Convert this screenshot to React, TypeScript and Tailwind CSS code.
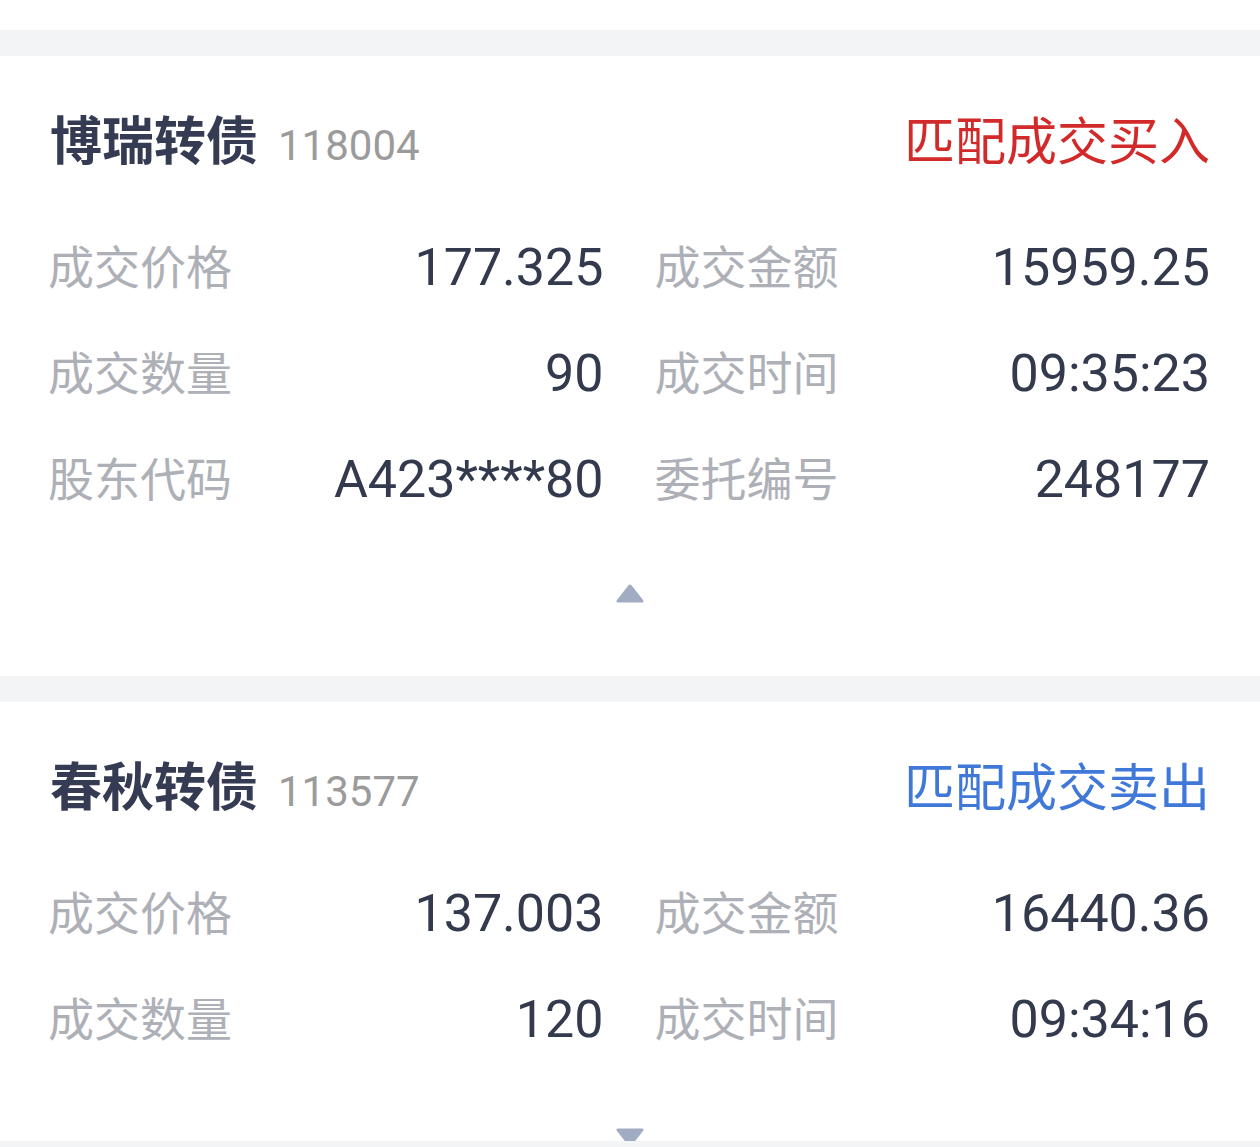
type Field = { label: string; value: string };

type Trade = {
  name: string;
  code: string;
  action: string;
  side: "buy" | "sell";
  left: Field[];
  right: Field[];
  expanded: boolean;
};

const trades: Trade[] = [
  {
    name: "博瑞转债",
    code: "118004",
    action: "匹配成交买入",
    side: "buy",
    left: [
      { label: "成交价格", value: "177.325" },
      { label: "成交数量", value: "90" },
      { label: "股东代码", value: "A423****80" },
    ],
    right: [
      { label: "成交金额", value: "15959.25" },
      { label: "成交时间", value: "09:35:23" },
      { label: "委托编号", value: "248177" },
    ],
    expanded: true,
  },
  {
    name: "春秋转债",
    code: "113577",
    action: "匹配成交卖出",
    side: "sell",
    left: [
      { label: "成交价格", value: "137.003" },
      { label: "成交数量", value: "120" },
    ],
    right: [
      { label: "成交金额", value: "16440.36" },
      { label: "成交时间", value: "09:34:16" },
    ],
    expanded: false,
  },
];

const cjk = "font-['Noto_Sans','Noto_Sans_CJK_SC',sans-serif]";
const num = "font-['Roboto','Noto_Sans_CJK_SC',sans-serif]";

function Cell({ field }: { field: Field }) {
  return (
    <div className="flex h-[106px] items-center justify-between">
      <span className={`${cjk} -mt-[4px] -ml-[2px] text-[46px] leading-none text-[#aeb0b8]`}>{field.label}</span>
      <span className={`${num} text-[52px] leading-none text-[#343a4d]`}>{field.value}</span>
    </div>
  );
}

function Arrow({ up }: { up: boolean }) {
  return (
    <svg width="28" height="19" viewBox="0 0 28 19" className="block">
      {up ? (
        <path d="M12.3 1.6 Q14 -0.4 15.7 1.6 L27.2 16.2 Q28.4 18.5 26 18.5 L2 18.5 Q-0.4 18.5 0.8 16.2 Z" fill="#a1abc1" />
      ) : (
        <path d="M12.3 17.4 Q14 19.4 15.7 17.4 L27.2 2.8 Q28.4 0.5 26 0.5 L2 0.5 Q-0.4 0.5 0.8 2.8 Z" fill="#a1abc1" />
      )}
    </svg>
  );
}

function TradeCard({ trade }: { trade: Trade }) {
  return (
    <div className={`bg-white pt-[44px] ${trade.expanded ? "pb-[73px]" : "h-[439px] overflow-hidden"}`}>
      {/* 标题行 */}
      <div className="flex h-[80px] items-center justify-between pl-[50px] pr-[50px]">
        <div className="flex items-baseline gap-[20px]">
          <span className={`${cjk} text-[52px] font-bold leading-none text-[#353b52]`}>{trade.name}</span>
          <span className={`${num} text-[42px] leading-none text-[#9b9b9b]`}>{trade.code}</span>
        </div>
        <span
          className={`${cjk} text-[51px] leading-none ${
            trade.side === "buy" ? "text-[#d22a2a]" : "text-[#3f78d9]"
          }`}
        >
          {trade.action}
        </span>
      </div>

      {/* 明细 */}
      <div className="mt-[35px] grid grid-cols-2 gap-x-[53px] pl-[50px] pr-[50px]">
        <div className="flex flex-col">
          {trade.left.map((f) => (
            <Cell key={f.label} field={f} />
          ))}
        </div>
        <div className="flex flex-col">
          {trade.right.map((f) => (
            <Cell key={f.label} field={f} />
          ))}
        </div>
      </div>

      <div className={`flex justify-center ${trade.expanded ? "mt-[51px]" : "mt-[55px]"}`}>
        <Arrow up={trade.expanded} />
      </div>
    </div>
  );
}

export default function App() {
  return (
    <div className="min-h-screen w-[1260px] bg-[#f3f4f6]">
      <div className="h-[30px] bg-white" />
      <div className="h-[26px]" />
      <TradeCard trade={trades[0]} />
      <div className="h-[26px]" />
      <TradeCard trade={trades[1]} />
    </div>
  );
}
